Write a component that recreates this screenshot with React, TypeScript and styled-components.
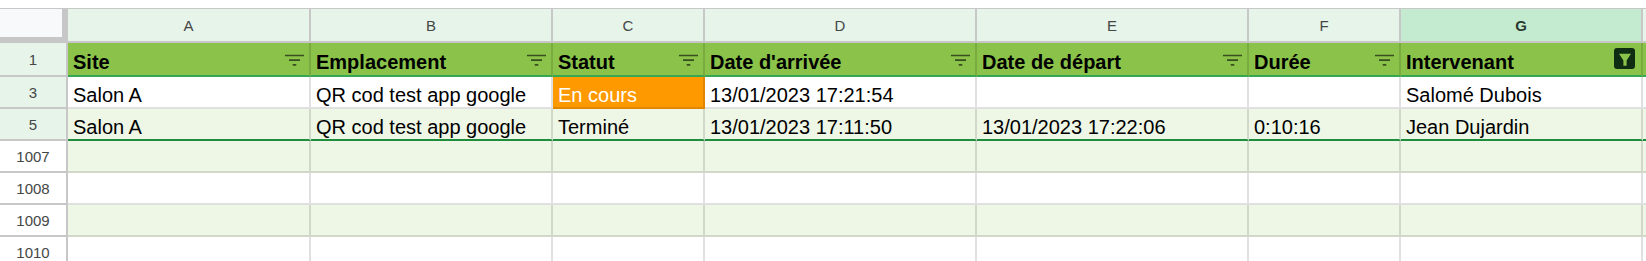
import React from 'react';
import styled, { createGlobalStyle } from 'styled-components';

const GlobalStyle = createGlobalStyle`
  * { box-sizing: border-box; }
  html, body { margin: 0; padding: 0; background: #fff; overflow: hidden; }
  body { font-family: "Liberation Sans", Arial, sans-serif; }
`;

type Tone = 'head' | 'plain' | 'band';
type Edge = 'grid' | 'head' | 'end';

// H is only a sliver at the right edge, its letter is out of view
const COLUMNS = [
  { letter: 'A', width: 243 },
  { letter: 'B', width: 242 },
  { letter: 'C', width: 152 },
  { letter: 'D', width: 272 },
  { letter: 'E', width: 272 },
  { letter: 'F', width: 152 },
  { letter: 'G', width: 242, selected: true },
  { letter: '', width: 200 },
];

const HEADERS = ['Site', 'Emplacement', 'Statut', "Date d'arrivée", 'Date de départ', 'Durée', 'Intervenant', ''];

const ROWS: { num: number; tone: Tone; tint: boolean; edge: Edge; cells: string[] }[] = [
  {
    num: 3, tone: 'plain', tint: true, edge: 'grid',
    cells: ['Salon A', 'QR cod test app google', 'En cours', '13/01/2023 17:21:54', '', '', 'Salomé Dubois', ''],
  },
  {
    num: 5, tone: 'band', tint: true, edge: 'end',
    cells: ['Salon A', 'QR cod test app google', 'Terminé', '13/01/2023 17:11:50', '13/01/2023 17:22:06', '0:10:16', 'Jean Dujardin', ''],
  },
  { num: 1007, tone: 'band', tint: false, edge: 'grid', cells: [] },
  { num: 1008, tone: 'plain', tint: false, edge: 'grid', cells: [] },
  { num: 1009, tone: 'band', tint: false, edge: 'grid', cells: [] },
  { num: 1010, tone: 'plain', tint: false, edge: 'grid', cells: [] },
];

const toneBg: Record<Tone, string> = {
  head: '#8bc34a',
  plain: '#ffffff',
  band: '#eef6e6',
};

const edgeColor: Record<Edge, string> = {
  grid: 'rgba(0, 0, 0, 0.12)',
  head: '#34a853',
  end: '#1e8e3e',
};

const Sheet = styled.div`
  width: 1646px;
  height: 261px;
  padding-top: 8px;
  overflow: hidden;
`;

const Grid = styled.div`
  display: grid;
  grid-template-columns: 68px ${COLUMNS.map((c) => `${c.width}px`).join(' ')};
  grid-template-rows: 35px 34px;
  grid-auto-rows: 32px;
  width: max-content;
`;

const Corner = styled.div`
  background: #f8f9fa;
  border-top: 1px solid #c7c7c7;
  border-right: 6px solid #c7c7c7;
  border-bottom: 6px solid #c7c7c7;
`;

const ColumnLetter = styled.div<{ $selected?: boolean }>`
  display: flex;
  align-items: center;
  justify-content: center;
  padding-top: 1px;
  background: ${(p) => (p.$selected ? '#c4ebd0' : '#e6f4ea')};
  border-top: 1px solid #c7c7c7;
  border-right: 2px solid #c7c7c7;
  border-bottom: 2px solid #c7c7c7;
  color: ${(p) => (p.$selected ? '#2b3a30' : '#444746')};
  font-size: 15px;
  font-weight: ${(p) => (p.$selected ? 700 : 400)};
`;

const RowNumber = styled.div<{ $tint: boolean }>`
  display: flex;
  align-items: center;
  justify-content: center;
  padding-top: 1px;
  background: ${(p) => (p.$tint ? '#e6f4ea' : '#ffffff')};
  border-right: 2px solid #c7c7c7;
  border-bottom: 2px solid #c7c7c7;
  color: #444746;
  font-size: 15px;
`;

const Cell = styled.div<{ $tone: Tone; $edge: Edge; $status?: boolean }>`
  display: flex;
  align-items: flex-end;
  justify-content: space-between;
  gap: 6px;
  padding: 0 5px ${(p) => (p.$tone === 'head' ? '2px' : '1px')} 5px;
  overflow: hidden;
  white-space: nowrap;
  font-size: 20px;
  line-height: 22px;
  font-weight: ${(p) => (p.$tone === 'head' ? 700 : 400)};
  color: ${(p) => (p.$status ? '#ffffff' : '#000000')};
  background: ${(p) => (p.$status ? '#ff9900' : toneBg[p.$tone])};
  border-right: 2px solid rgba(0, 0, 0, 0.12);
  border-bottom: 2px solid ${(p) => edgeColor[p.$edge]};
`;

const FilterIcon = styled.svg`
  flex-shrink: 0;
  align-self: center;
  margin-top: 4px;
`;

const ActiveFilter = styled.span`
  display: flex;
  flex-shrink: 0;
  align-self: center;
  width: 21px;
  height: 21px;
  margin-right: 1px;
  border-radius: 3px;
  background: #0f2d13;
`;

function Filter({ active }: { active?: boolean }) {
  if (active) {
    return (
      <ActiveFilter>
        <svg width="21" height="21" viewBox="0 0 21 21">
          <path d="M5 5.8h12l-4.4 6.6v5.4H9.4v-5.4z" fill="#8bc34a" />
        </svg>
      </ActiveFilter>
    );
  }
  return (
    <FilterIcon width="19" height="12" viewBox="0 0 19 12">
      <path d="M0 1.5h19M4 6.2h11M7.7 10.8h3.6" stroke="#384e1e" strokeWidth="1.7" />
    </FilterIcon>
  );
}

export default function App() {
  return (
    <>
      <GlobalStyle />
      <Sheet>
        <Grid>
          <Corner />
          {COLUMNS.map((c, i) => (
            <ColumnLetter key={i} $selected={c.selected}>
              {c.letter}
            </ColumnLetter>
          ))}

          <RowNumber $tint>1</RowNumber>
          {HEADERS.map((h, i) => (
            <Cell key={`h${i}`} $tone="head" $edge="head">
              <span>{h}</span>
              {h && <Filter active={COLUMNS[i].selected} />}
            </Cell>
          ))}

          {ROWS.map((row) => (
            <React.Fragment key={row.num}>
              <RowNumber $tint={row.tint}>{row.num}</RowNumber>
              {COLUMNS.map((c, i) => {
                const value = row.cells[i] ?? '';
                return (
                  <Cell
                    key={i}
                    $tone={row.tone}
                    $edge={row.edge}
                    $status={value === 'En cours'}
                  >
                    {value}
                  </Cell>
                );
              })}
            </React.Fragment>
          ))}
        </Grid>
      </Sheet>
    </>
  );
}
